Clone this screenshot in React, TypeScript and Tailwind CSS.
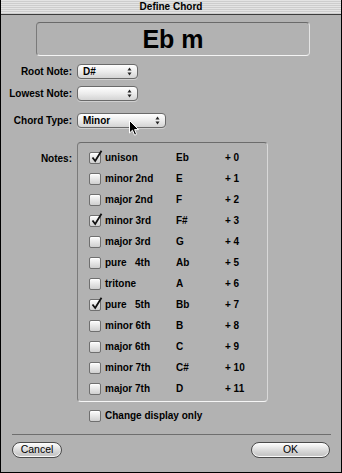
import React from "react";

const notes = [
  { name: "unison", note: "Eb", step: "+ 0", on: true },
  { name: "minor 2nd", note: "E", step: "+ 1", on: false },
  { name: "major 2nd", note: "F", step: "+ 2", on: false },
  { name: "minor 3rd", note: "F#", step: "+ 3", on: true },
  { name: "major 3rd", note: "G", step: "+ 4", on: false },
  { name: "pure\u00a0\u00a0\u00a04th", note: "Ab", step: "+ 5", on: false },
  { name: "tritone", note: "A", step: "+ 6", on: false },
  { name: "pure\u00a0\u00a0\u00a05th", note: "Bb", step: "+ 7", on: true },
  { name: "minor 6th", note: "B", step: "+ 8", on: false },
  { name: "major 6th", note: "C", step: "+ 9", on: false },
  { name: "minor 7th", note: "C#", step: "+ 10", on: false },
  { name: "major 7th", note: "D", step: "+ 11", on: false },
];

const Checkbox = ({ on }: { on?: boolean }) => (
  <div className="relative w-[12px] h-[12px] shrink-0 rounded-[2px] border border-[#6f6f6f] bg-gradient-to-b from-[#fdfdfd] via-[#e6e6e6] to-[#cfcfcf] shadow-[inset_0_1px_0_#fff]">
    {on && (
      <svg className="absolute left-[1px] top-[-3px]" width="12" height="13" viewBox="0 0 12 13">
        <path d="M1.5 7.5 L4.2 11 L10.5 0.8" fill="none" stroke="#111" strokeWidth="1.8" />
      </svg>
    )}
  </div>
);

const Arrows = () => (
  <svg width="5" height="9" viewBox="0 0 5 9" className="shrink-0">
    <path d="M2.5 0.5 L4.5 3.5 L0.5 3.5 Z" fill="#222" />
    <path d="M2.5 8.5 L4.5 5.5 L0.5 5.5 Z" fill="#222" />
  </svg>
);

const Popup = ({ value, w }: { value: string; w: string }) => (
  <div
    className={`${w} h-[15px] rounded-[4px] border border-[#6a6a6a] bg-gradient-to-b from-[#ffffff] via-[#ececec] to-[#d4d4d4] flex items-center justify-between pl-[5px] pr-[5px] text-[10px] font-bold text-black shadow-[0_1px_0_#d0d0d0]`}
  >
    <span className="leading-none">{value}</span>
    <Arrows />
  </div>
);

const PillButton = ({ label, w }: { label: string; w: string }) => (
  <div
    className={`${w} h-[16px] rounded-full border border-[#4a4a4a] bg-gradient-to-b from-[#ffffff] via-[#dcdcdc] to-[#bdbdbd] flex items-center justify-center text-[10.5px] text-black shadow-[inset_0_-1px_1px_#ffffff]`}
  >
    {label}
  </div>
);

export default function App() {
  return (
    <div
      className="w-[342px] h-[473px] border-x border-b border-black bg-[#b2b2b2] flex flex-col text-black"
      style={{ fontFamily: '"Liberation Sans", Arial, sans-serif' }}
    >
      <div className="h-[15px] border-b border-[#3c3c3c] bg-[repeating-linear-gradient(to_bottom,#e4e4e4_0px,#e4e4e4_1px,#cdcdcd_1px,#cdcdcd_2px)] flex items-center justify-center text-[10px] font-bold leading-none">
        Define Chord
      </div>

      <div className="mt-[7px] ml-[35px] w-[274px] h-[34px] rounded-[4px] border border-t-[#6a6a6a] border-l-[#7a7a7a] border-r-[#e4e4e4] border-b-[#f4f4f4] flex items-center justify-center text-[25px] font-bold leading-none">
        Eb m
      </div>

      <div className="mt-[8px] flex items-center">
        <div className="w-[71px] text-right text-[10px] font-bold">Root Note:</div>
        <div className="ml-[5px]">
          <Popup value="D#" w="w-[61px]" />
        </div>
      </div>
      <div className="mt-[7px] flex items-center">
        <div className="w-[71px] text-right text-[10px] font-bold">Lowest Note:</div>
        <div className="ml-[5px]">
          <Popup value="" w="w-[61px]" />
        </div>
      </div>
      <div className="mt-[12px] flex items-center">
        <div className="w-[71px] text-right text-[10px] font-bold">Chord Type:</div>
        <div className="ml-[5px] relative">
          <Popup value="Minor" w="w-[89px]" />
          <svg className="absolute left-[52px] top-[7px]" width="11" height="17" viewBox="0 0 11 17">
            <path
              d="M0.5 0.5 L0.5 13 L3.5 10.2 L5.6 15.2 L7.6 14.3 L5.6 9.6 L9.6 9.6 Z"
              fill="#000"
              stroke="#fff"
              strokeWidth="1"
            />
          </svg>
        </div>
      </div>

      <div className="mt-[14px] flex items-start">
        <div className="w-[71px] mt-[9px] text-right text-[10px] font-bold">Notes:</div>
        <div className="ml-[5px] w-[191px] h-[260px] rounded-[4px] border border-t-[#6c6c6c] border-l-[#7a7a7a] border-r-[#d8d8d8] border-b-[#f6f6f6] pt-[4px] pl-[11px]">
          {notes.map((n) => (
            <div key={n.step} className="h-[21px] flex items-center text-[10px] font-bold">
              <Checkbox on={n.on} />
              <span className="ml-[4px] w-[71px] whitespace-nowrap">{n.name}</span>
              <span className="w-[49px]">{n.note}</span>
              <span>{n.step}</span>
            </div>
          ))}
        </div>
      </div>

      <div className="mt-[3px] ml-[88px] h-[21px] flex items-center text-[10px] font-bold">
        <Checkbox />
        <span className="ml-[4px]">Change display only</span>
      </div>

      <div className="mt-[8px] ml-[11px] w-[319px] h-[1px] bg-[#6e6e6e]" />

      <div className="mt-[7px] mx-[11px] flex justify-between">
        <PillButton label="Cancel" w="w-[50px]" />
        <PillButton label="OK" w="w-[79px]" />
      </div>
    </div>
  );
}
